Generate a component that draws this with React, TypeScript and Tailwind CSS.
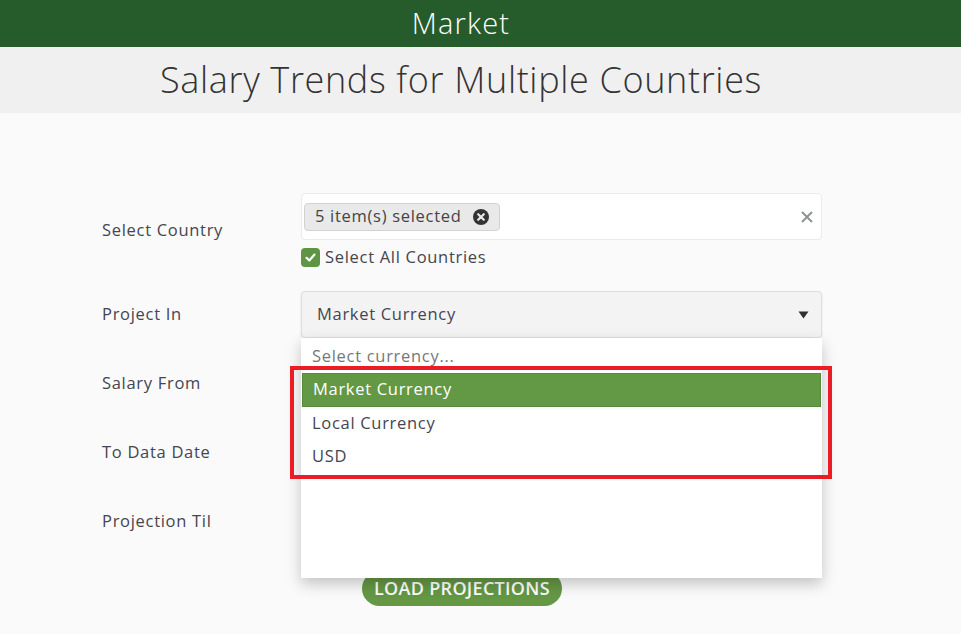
import React from "react";

const font = { fontFamily: "'Open Sans', 'Noto Sans', sans-serif" };
const txt = "text-[16.5px] tracking-[0.7px]";

function Row({ label, children, className = "" }: { label: string; children?: React.ReactNode; className?: string }) {
  return (
    <div className={`flex items-center ${className}`}>
      <div className={`w-[199px] shrink-0 ${txt} text-[#454550]`}>{label}</div>
      <div className="w-[521px]">{children}</div>
    </div>
  );
}

export default function App() {
  return (
    <div className="min-h-[634px] w-[961px] bg-[#fafafa] overflow-hidden" style={font}>
      <div className="h-[47px] bg-[#265b2b]">
        <div className="w-[922px] h-full flex items-center justify-center text-white text-[29px] font-light tracking-[1.2px] leading-none pb-[2px]">
          Market
        </div>
      </div>
      <div className="h-[66px] bg-[#f0f0f0]">
        <div className="w-[922px] h-full flex items-center justify-center text-[#333] text-[36px] font-light leading-none tracking-[0.65px]">
          Salary Trends for Multiple Countries
        </div>
      </div>

      <div className="pl-[102px] pt-[80px] flex flex-col gap-[22px]">
        <Row label="Select Country">
          <div className="flex flex-col">
            <div className="h-[47px] bg-white border border-[#ebebeb] rounded-[4px] flex items-center pl-[2px] pr-[7px]">
              <div className={`h-[28px] bg-[#e9e9e9] border border-[#d2d2d2] rounded-[4px] flex items-center pl-[10px] pr-[10px] gap-[11px] ${txt} text-[#444]`}>
                <span>5 item(s) selected</span>
                <svg width="16" height="16" viewBox="0 0 16 16">
                  <circle cx="8" cy="8" r="8" fill="#333" />
                  <path d="M5.2 5.2 L10.8 10.8 M10.8 5.2 L5.2 10.8" stroke="#e9e9e9" strokeWidth="2.2" strokeLinecap="round" />
                </svg>
              </div>
              <div className="flex-1" />
              <svg width="14" height="14" viewBox="0 0 14 14">
                <path d="M2 2 L12 12 M12 2 L2 12" stroke="#8c9590" strokeWidth="2" />
              </svg>
            </div>
            <div className="flex items-center mt-[7px] gap-[5px] h-[20px]">
              <div className="w-[19px] h-[19px] rounded-[4px] bg-[#5f9444] flex items-center justify-center">
                <svg width="13" height="13" viewBox="0 0 13 13">
                  <path d="M2.5 6.8 L5.3 9.5 L10.5 3.6" stroke="white" strokeWidth="2.2" fill="none" strokeLinecap="round" strokeLinejoin="round" />
                </svg>
              </div>
              <span className={`${txt} text-[#454550]`}>Select All Countries</span>
            </div>
          </div>
        </Row>

        <Row label="Project In" className="mt-[2px]">
          <div className="relative">
            <div className={`h-[47px] bg-[#f3f3f3] border border-[#dedede] rounded-[4px] shadow-[0_1px_3px_rgba(0,0,0,0.08)] flex items-center pl-[15px] pr-[12px] ${txt} text-[#454550]`}>
              <span className="flex-1">Market Currency</span>
              <svg width="11" height="8" viewBox="0 0 11 8">
                <path d="M0.5 0.5 L10.5 0.5 L5.5 7.5 Z" fill="#2f2f2f" />
              </svg>
            </div>
            <div className={`absolute left-0 top-[47px] w-[521px] h-[240px] bg-white shadow-[0_6px_14px_rgba(0,0,0,0.22)] z-10 ${txt}`}>
              <div className="h-[35px] flex items-center pl-[11px] text-[#777] pt-[1px]">Select currency...</div>
              <div className="mx-[1px] h-[34px] bg-[#639845] border border-[#578a3b] flex items-center pl-[10px] pb-[1px] text-white">
                Market Currency
              </div>
              <div className="h-[33px] flex items-center pl-[11px] text-[#454550]">Local Currency</div>
              <div className="h-[33px] flex items-center pl-[11px] text-[#454550]">USD</div>
            </div>
            <div className="absolute left-[-11px] top-[75px] w-[542px] h-[113px] border-[4px] border-[#ec1c24] z-20 pointer-events-none" />
          </div>
        </Row>

        <Row label="Salary From">
          <div className="h-[47px]" />
        </Row>
        <Row label="To Data Date">
          <div className="h-[47px]" />
        </Row>
        <Row label="Projection Til">
          <div className="h-[47px]" />
        </Row>

        <div className="pl-[260px] mt-[4px]">
          <div className="inline-flex h-[35px] items-center px-[12px] rounded-full bg-[#649845] text-white text-[18px] font-semibold tracking-[0.3px]">
            LOAD PROJECTIONS
          </div>
        </div>
      </div>
    </div>
  );
}
